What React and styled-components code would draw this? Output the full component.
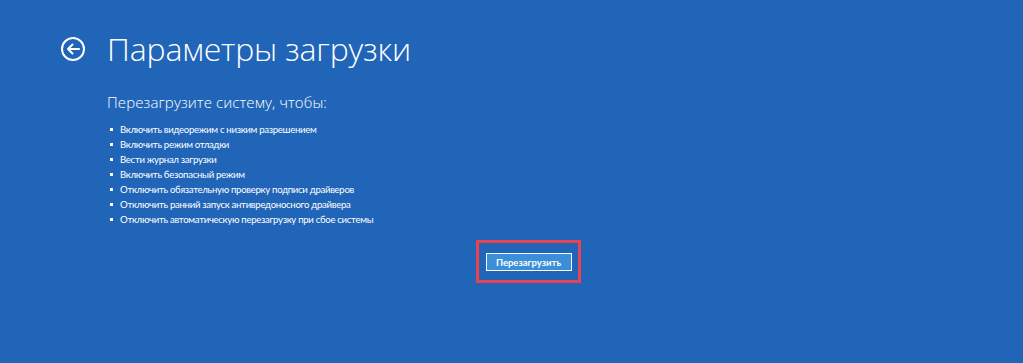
import React from "react";
import styled, { createGlobalStyle } from "styled-components";

const GlobalStyle = createGlobalStyle`
  html, body {
    margin: 0;
    padding: 0;
    background: #2165b8;
  }
  body {
    font-family: "Open Sans", "Noto Sans", sans-serif;
    color: #fff;
  }
`;

const Page = styled.div`
  width: 1023px;
  height: 363px;
  background: #2165b8;
  box-sizing: border-box;
  padding: 30px 0 0 60px;
  overflow: hidden;
`;

const Header = styled.div`
  display: flex;
  align-items: center;
  gap: 21px;
  height: 38px;
`;

const BackButton = styled.svg`
  width: 26px;
  height: 26px;
  flex: none;
`;

const Title = styled.h1`
  margin: 0;
  font-family: "Open Sans", "Noto Sans", sans-serif;
  font-weight: 300;
  font-size: 32px;
  letter-spacing: -0.15px;
  line-height: 38px;
`;

const Body = styled.div`
  padding: 24px 0 0 47px;
`;

const Subtitle = styled.h2`
  margin: 0 0 10px;
  font-weight: 300;
  font-size: 15px;
  letter-spacing: 0.1px;
  line-height: 20px;
`;

const List = styled.ul`
  margin: 0;
  padding: 0;
  list-style: none;
`;

const Item = styled.li`
  position: relative;
  padding-left: 13px;
  font-family: "Lato", "Open Sans", sans-serif;
  font-size: 9.6px;
  letter-spacing: -0.3px;
  line-height: 15px;
  &::before {
    content: "";
    position: absolute;
    left: 3px;
    top: 6px;
    width: 2.5px;
    height: 2.5px;
    background: #fff;
  }
`;

const Actions = styled.div`
  display: flex;
  justify-content: center;
  padding: 13px 0 0;
  width: 936px;
`;

const Highlight = styled.div`
  border: 3px solid #e8434f;
  padding: 10px 6px 9px 7px;
  display: flex;
`;

const RestartButton = styled.button`
  font-family: "Lato", "Open Sans", sans-serif;
  font-size: 9.5px;
  font-weight: 700;
  color: #fff;
  background: #3b8ed8;
  border: 1px solid #fff;
  padding: 0;
  height: 18px;
  width: 86px;
  cursor: pointer;
`;

const items = [
  "Включить видеорежим с низким разрешением",
  "Включить режим отладки",
  "Вести журнал загрузки",
  "Включить безопасный режим",
  "Отключить обязательную проверку подписи драйверов",
  "Отключить ранний запуск антивредоносного драйвера",
  "Отключить автоматическую перезагрузку при сбое системы",
];

export default function App() {
  return (
    <>
      <GlobalStyle />
      <Page>
        <Header>
          <BackButton viewBox="0 0 26 26" fill="none" stroke="#fff" strokeWidth="2">
            <circle cx="13" cy="13" r="11" />
            <path d="M19 13H8M12.5 8.5L8 13l4.5 4.5" strokeLinecap="round" strokeLinejoin="round" />
          </BackButton>
          <Title>Параметры загрузки</Title>
        </Header>
        <Body>
          <Subtitle>Перезагрузите систему, чтобы:</Subtitle>
          <List>
            {items.map((t) => (
              <Item key={t}>{t}</Item>
            ))}
          </List>
        </Body>
        <Actions>
          <Highlight>
            <RestartButton>Перезагрузить</RestartButton>
          </Highlight>
        </Actions>
      </Page>
    </>
  );
}
